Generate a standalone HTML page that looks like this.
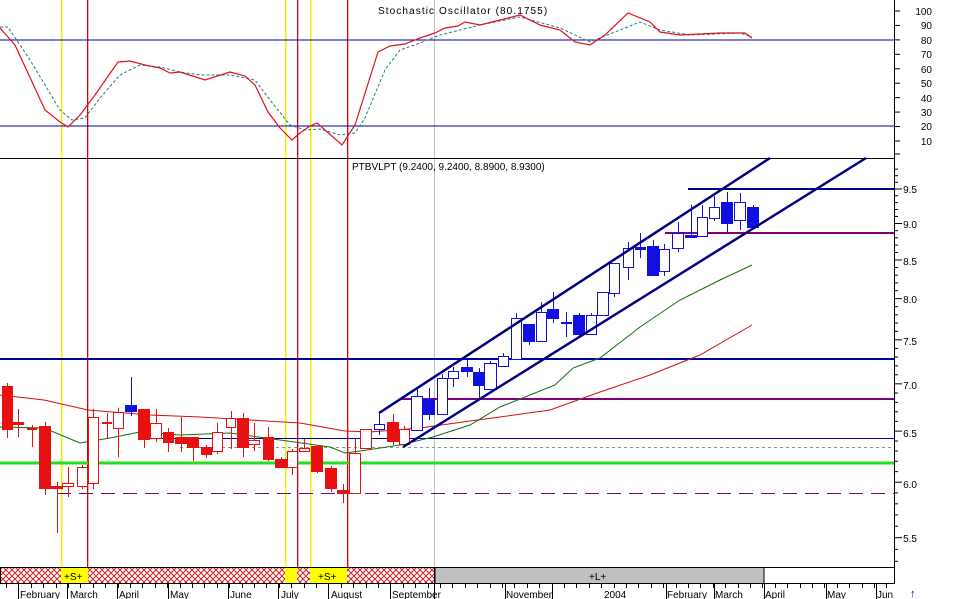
<!DOCTYPE html>
<html><head><meta charset="utf-8"><style>
html,body{margin:0;padding:0;background:#fff;width:962px;height:599px;overflow:hidden}
svg{display:block}
text{font-family:"Liberation Sans",Arial,sans-serif;font-size:10px;fill:#000}
</style></head><body>
<svg id="s" width="962" height="599" viewBox="0 0 962 599" xmlns="http://www.w3.org/2000/svg">
<defs>
<pattern id="hx" width="6" height="6" patternUnits="userSpaceOnUse">
<rect width="6" height="6" fill="#fff"/>
<path d="M0 0L6 6M6 0L0 6" stroke="#d02020" stroke-width="1"/>
</pattern>
</defs>
<g>
<rect x="61" y="0" width="1.5" height="567" fill="#f0f000"/>
<rect x="285" y="0" width="1.5" height="567" fill="#f0f000"/>
<rect x="310" y="0" width="1.5" height="567" fill="#f0f000"/>
<rect x="87" y="0" width="1.3" height="567" fill="#e00000"/>
<rect x="297" y="0" width="1.3" height="567" fill="#e00000"/>
<rect x="347" y="0" width="1.3" height="567" fill="#e00000"/>
<rect x="434" y="0" width="1" height="567" fill="#c0c0c0"/>
</g>
<line x1="0" y1="40" x2="894" y2="40" stroke="#0000a0"/>
<line x1="0" y1="126" x2="894" y2="126" stroke="#0000a0"/>
<polyline fill="none" stroke="#208080" stroke-dasharray="3,2" points="0,27 8,27 30,60 60,110 72,120 85,118 100,98 120,75 140,65 160,67 180,72 200,75 230,75 255,80 270,100 290,125 305,130 320,129 340,135 355,133 365,118 385,70 400,50 420,43 440,35 480,25 520,17 560,28 590,42 620,30 640,22 660,30 690,35 740,33 752,37"/>
<polyline fill="none" stroke="#e01020" stroke-width="1.2" points="0,28 15,45 45,110 60,122 68,127 80,115 95,95 118,62 130,61 145,65 160,68 170,73 180,72 205,80 230,72 245,76 255,85 268,112 280,128 292,140 300,133 310,126 317,123 325,130 342,145 355,125 378,52 390,46 405,44 420,38 435,33 445,28 458,26 465,22 480,25 500,20 520,15 540,25 560,30 575,42 590,45 605,35 628,13 650,22 660,32 680,35 720,33 745,33 752,38"/>
<text x="378" y="14" style="letter-spacing:1.1px">Stochastic Oscillator (80.1755)</text>
<line x1="0" y1="158.5" x2="894" y2="158.5" stroke="#000"/>
<line x1="688" y1="189" x2="894" y2="189" stroke="#000080" stroke-width="2"/>
<line x1="665" y1="233" x2="894" y2="233" stroke="#800080" stroke-width="2"/>
<line x1="0" y1="359" x2="894" y2="359" stroke="#0000a0" stroke-width="2"/>
<line x1="400" y1="399" x2="894" y2="399" stroke="#800080" stroke-width="2"/>
<line x1="150" y1="438.5" x2="894" y2="438.5" stroke="#0000a0"/>
<line x1="180" y1="447.5" x2="894" y2="447.5" stroke="#909090" stroke-dasharray="3,3"/>
<line x1="0" y1="463" x2="894" y2="463" stroke="#20e020" stroke-width="3"/>
<line x1="57" y1="493.5" x2="894" y2="493.5" stroke="#800080" stroke-dasharray="14,8"/>
<polyline fill="none" stroke="#d01010" points="0,395 44,400 88,410 150,415 200,417 250,420 300,423 345,431 370,432 420,428 470,421 500,417 550,410 600,392 650,375 700,355 752,325"/>
<polyline fill="none" stroke="#107010" points="0,427 44,428 80,443 110,438 140,432 180,435 230,433 280,440 330,447 345,453 360,451 400,445 433,437 470,425 500,407 530,395 555,385 573,368 600,358 640,327 680,300 720,280 752,265"/>
<g id="candles"></g>
<line x1="379" y1="413" x2="770" y2="158" stroke="#000080" stroke-width="2.5"/>
<line x1="403" y1="447" x2="866" y2="158" stroke="#000080" stroke-width="2.5"/>
<text x="352" y="170">PTBVLPT (9.2400, 9.2400, 8.8900, 8.9300)</text>
<line x1="894.5" y1="0" x2="894.5" y2="584" stroke="#000"/>
<g id="ticks" stroke="#000"></g>
<g text-anchor="end">
<text x="932" y="15">100</text><text x="932" y="29">90</text><text x="932" y="44">80</text><text x="932" y="58">70</text><text x="932" y="73">60</text><text x="932" y="87">50</text><text x="932" y="102">40</text><text x="932" y="116">30</text><text x="932" y="130">20</text><text x="932" y="145">10</text>
<text x="917" y="193">9.5</text><text x="917" y="228">9.0</text><text x="917" y="265">8.5</text><text x="917" y="303">8.0</text><text x="917" y="345">7.5</text><text x="917" y="389">7.0</text><text x="917" y="437">6.5</text><text x="917" y="488">6.0</text><text x="917" y="542">5.5</text>
</g>
<rect x="0.5" y="567.5" width="434" height="16" fill="url(#hx)" stroke="#000"/>
<rect x="61" y="568" width="27" height="15" fill="#ffff00"/>
<rect x="285" y="568" width="12" height="15" fill="#ffff00"/>
<rect x="310" y="568" width="37" height="15" fill="#ffff00"/>
<rect x="435" y="567.5" width="329" height="16" fill="#c0c0c0" stroke="#000"/>
<line x1="764" y1="567.5" x2="894" y2="567.5" stroke="#000"/>
<text x="64" y="580">+S+</text>
<text x="318" y="580">+S+</text>
<text x="589" y="580">+L+</text>
<line x1="0" y1="583.5" x2="894" y2="583.5" stroke="#000"/>
<g id="xt" stroke="#000"></g>
<text x="20" y="598">February</text><text x="70" y="598">March</text><text x="119" y="598">April</text><text x="170" y="598">May</text><text x="230" y="598">June</text><text x="281" y="598">July</text><text x="331" y="598">August</text><text x="392" y="598">September</text><text x="506" y="598">November</text><text x="604" y="598">2004</text><text x="667" y="598">February</text><text x="715" y="598">March</text><text x="765" y="598">April</text><text x="827" y="598">May</text><text x="877" y="598">Jun</text>
<text x="910" y="597" style="fill:#0000c0;font-weight:bold;font-size:11px">↑</text>
</svg>
<script>
var C=[
[2,12,386,429,383,438,'R'],[13,23,422,424,409,437,'R'],[27,36,428,429,425,447,'R'],[39,50,426,488,422,495,'R'],[51,62,486,488,482,533,'R'],[62,73,483,486,467,497,'r'],[77,87,467,486,465,489,'r'],[88,98,417,483,409,489,'r'],[102,111,422,423,413,438,'R'],[113,123,412,428,408,457,'r'],[125,136,405,411,377,416,'B'],[138,149,409,439,409,448,'R'],[150,161,423,438,409,442,'r'],[163,173,432,442,428,452,'R'],[175,186,437,443,417,452,'R'],[187,198,437,447,437,461,'R'],[201,211,447,454,445,458,'R'],[212,222,432,451,423,454,'r'],[226,235,418,427,411,449,'r'],[237,248,418,447,413,457,'R'],[248,259,440,444,423,451,'r'],[263,273,437,459,427,461,'R'],[275,286,459,467,457,467,'R'],[287,297,451,467,449,475,'r'],[299,309,448,451,439,451,'r'],[311,322,446,471,445,473,'R'],[325,336,468,488,466,492,'R'],[337,348,490,493,484,503,'R'],[349,360,453,493,439,493,'r'],[360,371,429,448,429,448,'r'],
[374,384,424,429,413,435,'b'],[387,398,422,441,414,445,'R'],[399,409,429,444,426,446,'r'],[411,422,396,430,389,430,'b'],[423,434,399,414,388,420,'B'],[437,447,378,414,374,414,'b'],[448,458,371,378,367,387,'b'],[461,472,367,371,360,377,'B'],[473,484,372,385,368,398,'B'],[484,496,363,389,361,389,'b'],[498,508,356,366,353,367,'b'],[511,521,318,359,313,359,'b'],[523,534,324,341,324,345,'B'],[536,546,312,341,302,341,'b'],[547,558,309,318,292,323,'B'],[561,571,322,323,312,337,'b'],[573,584,315,334,313,336,'B'],[586,596,315,334,313,335,'b'],[597,608,292,315,292,315,'b'],[609,619,263,293,263,297,'b'],[623,633,248,267,242,280,'b'],[635,645,247,249,233,258,'B'],[647,658,246,275,240,275,'B'],[659,669,249,271,244,276,'b'],[672,683,233,248,222,252,'b'],[685,696,235,237,205,237,'B'],[697,707,217,236,205,236,'b'],[709,719,207,218,196,221,'b'],[721,732,202,223,192,232,'B'],[734,745,202,220,193,230,'b'],[747,758,207,227,205,228,'B']];
var ns='http://www.w3.org/2000/svg',g=document.getElementById('candles');
function el(n,a,p){var e=document.createElementNS(ns,n);for(var k in a)e.setAttribute(k,a[k]);p.appendChild(e);return e;}
C.forEach(function(c){var col=(c[6]=='R'||c[6]=='r')?'#e81010':'#1010e0';var fill=(c[6]=='R'||c[6]=='B')?col:'#fff';var cx=Math.round((c[0]+c[1])/2)+0.5;
el('line',{x1:cx,y1:c[4],x2:cx,y2:c[5],stroke:col},g);
el('rect',{x:c[0]+0.5,y:c[2]+0.5,width:c[1]-c[0],height:Math.max(1,c[3]-c[2]),fill:fill,stroke:col},g);});
var t=document.getElementById('ticks');
for(var v=10;v<=100;v+=10){var y=155.4-1.444*v;el('line',{x1:894,y1:y,x2:900,y2:y},t);}
el('line',{x1:894,y1:154,x2:900,y2:154},t);
for(var p=5.3;p<=9.8;p+=0.1){var y=189+(2.2513-Math.log(p))*638;if(y<160||y>580)continue;var maj=Math.abs(p*2-Math.round(p*2))<0.01;el('line',{x1:894,y1:y,x2:maj?902:898,y2:y},t);}
var xt=document.getElementById('xt');
var big=[18,67,117,168,228,278,328,390,434,505,552,666,714,764,826,876];
big.forEach(function(x){el('line',{x1:x+0.5,y1:583,x2:x+0.5,y2:599},xt);});
for(var x=6;x<894;x+=12.4){el('line',{x1:Math.round(x)+0.5,y1:583,x2:Math.round(x)+0.5,y2:588},xt);}
</script>
</body></html>
